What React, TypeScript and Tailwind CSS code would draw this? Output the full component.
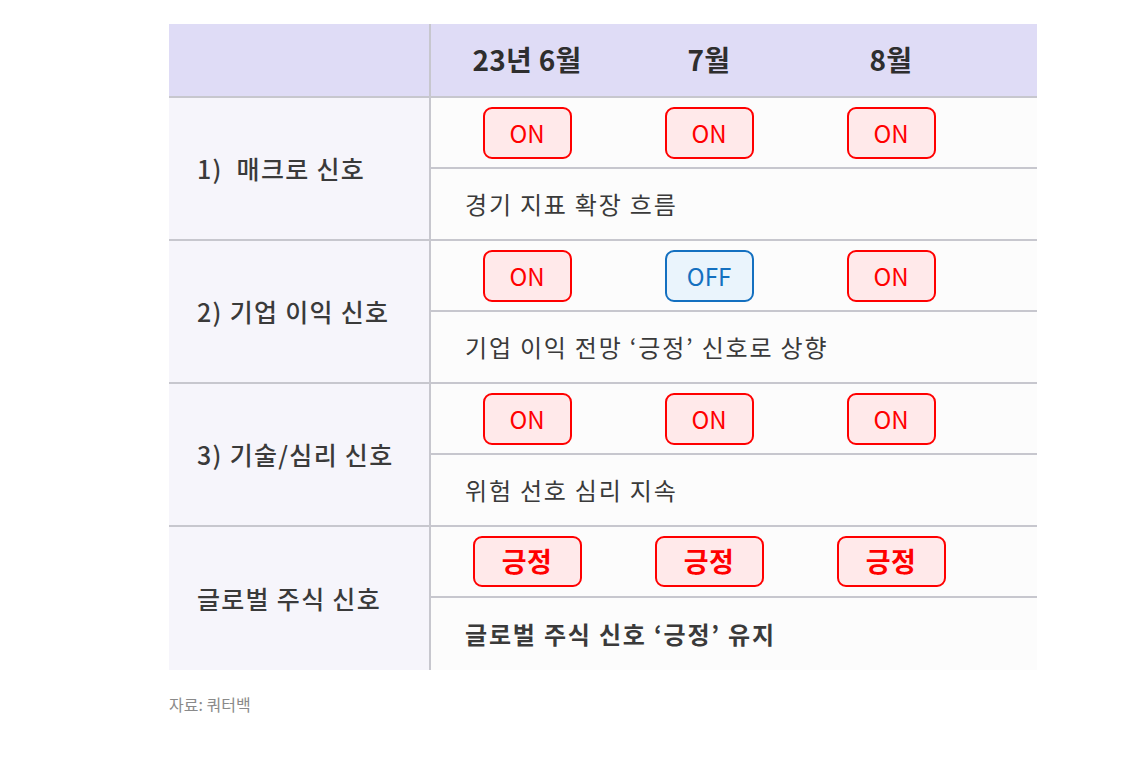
import React from 'react'

type Signal = 'ON' | 'OFF' | '긍정'

interface Row {
  label: string
  signals: Signal[]
  note: string
  bold?: boolean
}

const rows: Row[] = [
  { label: '1)  매크로 신호', signals: ['ON', 'ON', 'ON'], note: '경기 지표 확장 흐름' },
  { label: '2) 기업 이익 신호', signals: ['ON', 'OFF', 'ON'], note: '기업 이익 전망 ‘긍정’ 신호로 상향' },
  { label: '3) 기술/심리 신호', signals: ['ON', 'ON', 'ON'], note: '위험 선호 심리 지속' },
  { label: '글로벌 주식 신호', signals: ['긍정', '긍정', '긍정'], note: '글로벌 주식 신호 ‘긍정’ 유지', bold: true },
]

const months = ['23년 6월', '7월', '8월']

function Badge({ value }: { value: Signal }) {
  if (value === 'OFF') {
    return (
      <div className="flex h-[52px] w-[89px] items-center justify-center rounded-[9px] border-2 border-[#1470c0] bg-[#eaf4fc] text-[24px] text-[#1470c0]">
        OFF
      </div>
    )
  }
  if (value === '긍정') {
    return (
      <div className="flex h-[51px] w-[109px] items-center justify-center rounded-[9px] border-2 border-[#ff0000] bg-[#ffe9ea] text-[27px] font-bold tracking-[0.5px] text-[#ff0000]">
        긍정
      </div>
    )
  }
  return (
    <div className="flex h-[52px] w-[89px] items-center justify-center rounded-[9px] border-2 border-[#ff0000] bg-[#ffe9ea] text-[24px] text-[#ff0000]">
      ON
    </div>
  )
}

export default function App() {
  return (
    <div
      className="min-h-[761px] w-[1125px] bg-white pl-[169px] pt-[24px]"
      style={{ fontFamily: '"Noto Sans CJK KR", "Noto Sans", sans-serif' }}
    >
      <div className="w-[868px]">
        {/* Header */}
        <div className="flex h-[74px] border-b-2 border-[#c7c7ce] bg-[#dfdcf6]">
          <div className="w-[262px] border-r-2 border-[#c7c7ce]" />
          <div className="flex flex-1 items-center pl-[5px] pb-[2px]">
            {months.map((m) => (
              <div key={m} className="w-[182px] text-center text-[28px] font-bold tracking-[0.3px] text-[#2e2e2e]">
                {m}
              </div>
            ))}
          </div>
        </div>

        {/* Body */}
        {rows.map((row, i) => (
          <div key={row.label} className="flex">
            <div
              className={`flex w-[262px] items-center border-r-2 border-[#c7c7ce] bg-[#f6f5fb] pl-[28px] ${
                i < rows.length - 1 ? 'border-b-2' : ''
              }`}
            >
              <span className="whitespace-pre text-[25px] font-medium tracking-[1.3px] text-[#3a3a3a]">{row.label}</span>
            </div>
            <div className="flex-1 bg-[#fcfcfc]">
              <div className="flex h-[71px] items-center border-b-2 border-[#c7c7ce] pl-[5px]">
                {row.signals.map((s, j) => (
                  <div key={j} className="flex w-[182px] justify-center">
                    <Badge value={s} />
                  </div>
                ))}
              </div>
              <div
                className={`flex h-[72px] items-center pl-[34px] ${
                  i < rows.length - 1 ? 'border-b-2 border-[#c7c7ce]' : ''
                }`}
              >
                <span className={`text-[24px] tracking-[1.8px] text-[#3a3a3a] ${row.bold ? 'font-bold' : ''}`}>
                  {row.note}
                </span>
              </div>
            </div>
          </div>
        ))}
      </div>

      <p className="mt-[22px] text-[16px] text-[#8a8a8a]">자료: 쿼터백</p>
    </div>
  )
}
